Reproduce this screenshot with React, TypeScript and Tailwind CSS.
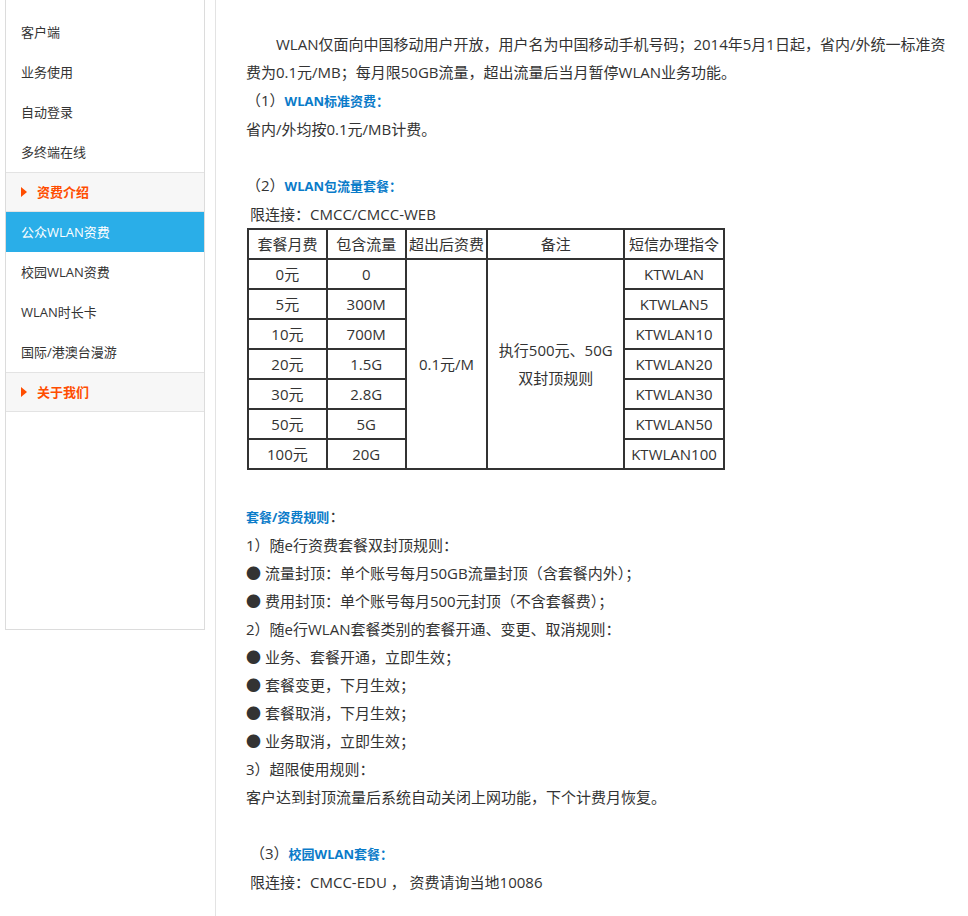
const F = { fontFamily: '"Open Sans","Noto Sans CJK SC",sans-serif' };

function Side() {
  const item = "h-10 flex items-center pl-[15px] text-[13px] text-[#333]";
  const head = "h-10 flex items-center pl-[15px] text-[13px] font-bold text-[#ff4d00] bg-[#f7f7f7] border-t border-b border-[#e3e3e3]";
  const tri = <span className="inline-block w-0 h-0 border-y-[5px] border-y-transparent border-l-[6px] border-l-[#ff4d00] mr-[10px]" />;
  return (
    <div className="ml-[5px] w-[200px] h-[630px] border-x border-b border-[#dcdcdc] pt-[12px] flex flex-col">
      <div className={item}>客户端</div>
      <div className={item}>业务使用</div>
      <div className={item}>自动登录</div>
      <div className={item}>多终端在线</div>
      <div className={head}>{tri}资费介绍</div>
      <div className="h-10 flex items-center pl-[15px] text-[13px] text-white bg-[#2aaee8]">公众WLAN资费</div>
      <div className={item}>校园WLAN资费</div>
      <div className={item}>WLAN时长卡</div>
      <div className={item}>国际/港澳台漫游</div>
      <div className={head}>{tri}关于我们</div>
    </div>
  );
}

const rows = [["0元","0","KTWLAN"],["5元","300M","KTWLAN5"],["10元","700M","KTWLAN10"],["20元","1.5G","KTWLAN20"],["30元","2.8G","KTWLAN30"],["50元","5G","KTWLAN50"],["100元","20G","KTWLAN100"]];

function Table() {
  const td = "border-2 border-[#333] text-center p-0 h-[30px]";
  return (
    <table className="border-collapse text-[15px] text-[#333] ml-[1px]" style={{ width: 478 }}>
      <thead>
        <tr>
          <td className={td} style={{ width: 79 }}>套餐月费</td>
          <td className={td} style={{ width: 79 }}>包含流量</td>
          <td className={td} style={{ width: 82 }}>超出后资费</td>
          <td className={td} style={{ width: 137 }}>备注</td>
          <td className={td} style={{ width: 100 }}>短信办理指令</td>
        </tr>
      </thead>
      <tbody>
        {rows.map((r, i) => (
          <tr key={i}>
            <td className={td}>{r[0]}</td>
            <td className={td}>{r[1]}</td>
            {i === 0 && <td className={td} rowSpan={7}>0.1元/M</td>}
            {i === 0 && <td className={td + " leading-[28px]"} rowSpan={7}>执行500元、50G<br />双封顶规则</td>}
            <td className={td}>{r[2]}</td>
          </tr>
        ))}
      </tbody>
    </table>
  );
}

export default function App() {
  const b = "text-[#0a7bc9] font-bold text-[13px]";
  return (
    <div style={F} className="flex w-[968px] h-[916px] bg-white text-[15px] text-[#333] leading-[28px]">
      <Side />
      <div className="ml-[10px] border-l border-[#e3e3e3] pl-[30px] pt-[30px] w-[752px]">
        <p className="indent-[30px] pr-[18px]">WLAN仅面向中国移动用户开放，用户名为中国移动手机号码；2014年5月1日起，省内/外统一标准资费为0.1元/MB；每月限50GB流量，超出流量后当月暂停WLAN业务功能。</p>
        <p>（1）<span className={b}>WLAN标准资费：</span></p>
        <p>省内/外均按0.1元/MB计费。</p>
        <p>&nbsp;</p>
        <p>（2）<span className={b}>WLAN包流量套餐：</span></p>
        <p className="pl-[4px]">限连接：CMCC/CMCC-WEB</p>
        <Table />
        <div className="h-[32px]" />
        <p><span className={b}>套餐/资费规则</span>：</p>
        <p>1）随e行资费套餐双封顶规则：</p>
        <p>● 流量封顶：单个账号每月50GB流量封顶（含套餐内外）；</p>
        <p>● 费用封顶：单个账号每月500元封顶（不含套餐费）；</p>
        <p>2）随e行WLAN套餐类别的套餐开通、变更、取消规则：</p>
        <p>● 业务、套餐开通，立即生效；</p>
        <p>● 套餐变更，下月生效；</p>
        <p>● 套餐取消，下月生效；</p>
        <p>● 业务取消，立即生效；</p>
        <p>3）超限使用规则：</p>
        <p>客户达到封顶流量后系统自动关闭上网功能，下个计费月恢复。</p>
        <p>&nbsp;</p>
        <p className="pl-[4px]">（3）<span className={b}>校园WLAN套餐：</span></p>
        <p className="pl-[4px]">限连接：CMCC-EDU ， 资费请询当地10086</p>
      </div>
    </div>
  );
}
